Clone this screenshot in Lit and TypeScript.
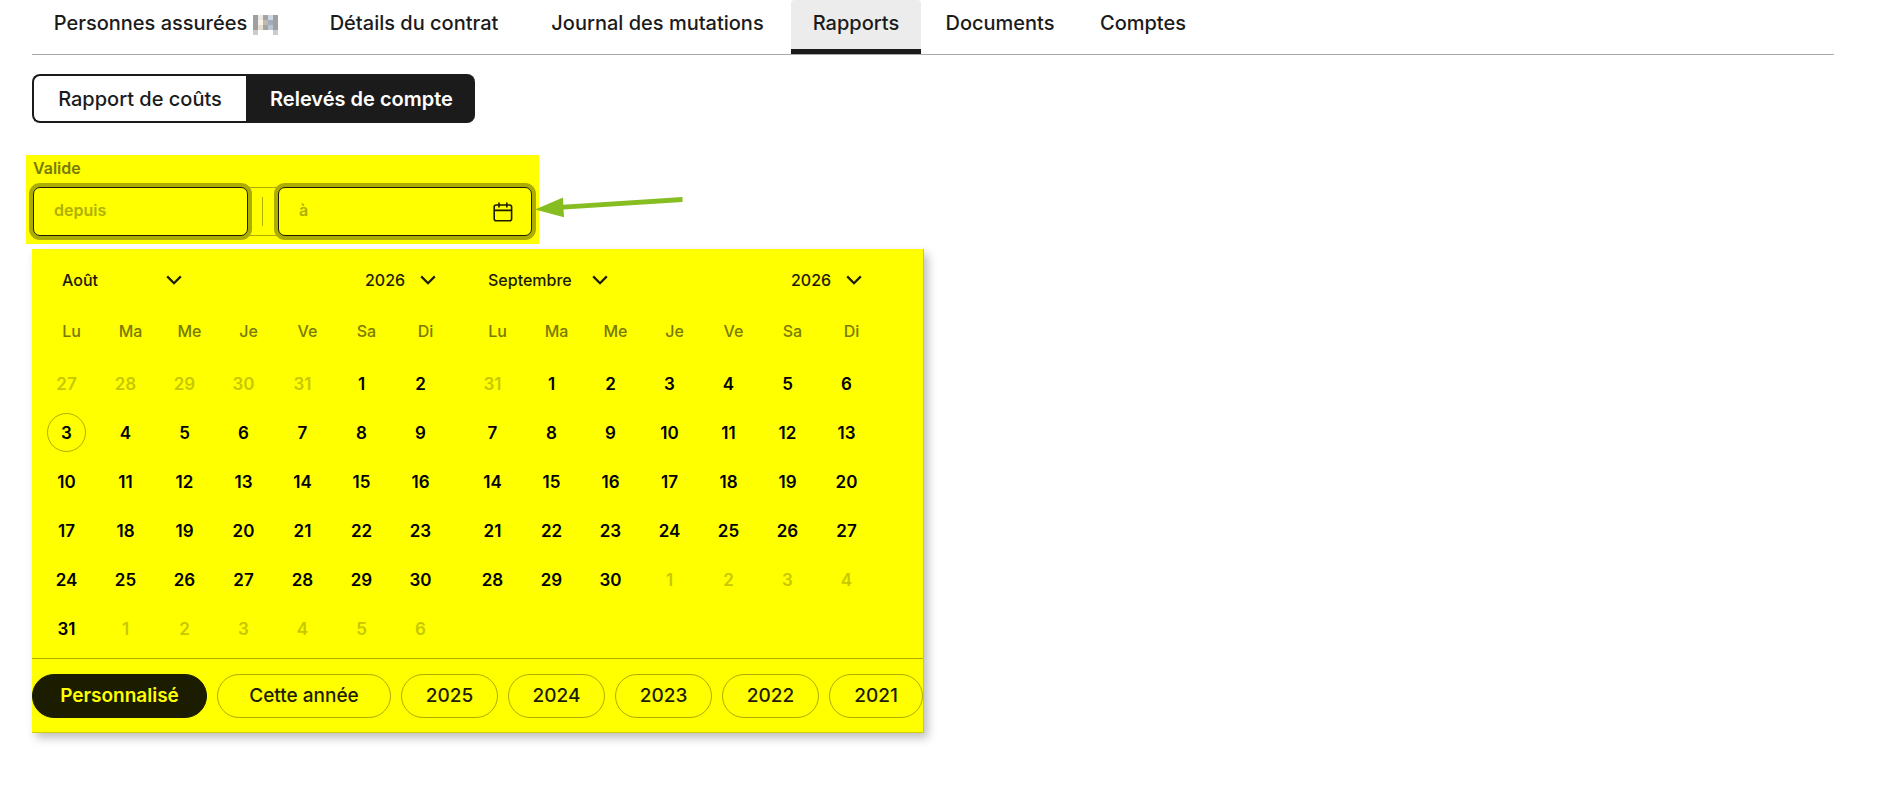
import { LitElement, html, svg, css } from "lit";
import { customElement, property } from "lit/decorators.js";
import { classMap } from "lit/directives/class-map.js";

const WEEKDAYS = ["Lu", "Ma", "Me", "Je", "Ve", "Sa", "Di"];

const chevron = html`<svg class="chevron" viewBox="0 0 16 10" width="16" height="10" aria-hidden="true">
  <path d="M1.200 1.400 8 8.200l6.800-6.800" fill="none" stroke="currentColor" stroke-width="2.200" />
</svg>`;

interface Day {
  n: number;
  outside: boolean;
}

@customElement("month-view")
export class MonthView extends LitElement {
  @property() name = "";
  @property() year = "";
  @property({ type: Number }) before = 0;
  @property({ type: Number }) previousLength = 31;
  @property({ type: Number }) length = 31;
  @property({ type: Number }) today = 0;

  static styles = css`
    :host {
      display: block;
    }
    .head {
      display: flex;
      justify-content: space-between;
      align-items: center;
      height: 46px;
      padding: 0 14px 0 25px;
    }
    .picker {
      display: grid;
      align-items: center;
      color: #1c1c00;
    }
    .picker > * {
      grid-area: 1 / 1;
    }
    .chevron {
      justify-self: end;
      pointer-events: none;
    }
    select {
      appearance: none;
      border: 0;
      margin: 0;
      padding: 0;
      background: none;
      color: inherit;
      font: 500 16px/24px Inter, sans-serif;
    }
    .month {
      width: 120px;
    }
    .year {
      width: 71px;
    }
    table {
      border-collapse: collapse;
      table-layout: fixed;
      width: 413px;
    }
    th {
      height: 56px;
      padding: 0 0 0 10px;
      color: #7a7a00;
      font: 500 16px/24px Inter, sans-serif;
    }
    td {
      height: 49px;
      padding: 0;
      text-align: center;
    }
    .day {
      width: 39px;
      height: 39px;
      padding: 0;
      border: 1px solid transparent;
      border-radius: 50%;
      background: none;
      color: #000;
      font: 600 17px/24px Inter, sans-serif;
      vertical-align: middle;
    }
    .outside {
      color: #c8c800;
    }
    .today {
      border-color: #adad00;
    }
  `;

  private weeks(): Day[][] {
    const days: Day[] = [];
    for (let i = this.before; i > 0; i--) days.push({ n: this.previousLength - i + 1, outside: true });
    for (let n = 1; n <= this.length; n++) days.push({ n, outside: false });
    for (let n = 1; days.length % 7; n++) days.push({ n, outside: true });
    const rows: Day[][] = [];
    for (let i = 0; i < days.length; i += 7) rows.push(days.slice(i, i + 7));
    return rows;
  }

  render() {
    return html`
      <div class="head">
        <div class="picker">
          <select class="month" aria-label="Mois"><option>${this.name}</option></select>
          ${chevron}
        </div>
        <div class="picker">
          <select class="year" aria-label="Année"><option>${this.year}</option></select>
          ${chevron}
        </div>
      </div>
      <table>
        <thead>
          <tr>${WEEKDAYS.map((d) => html`<th scope="col">${d}</th>`)}</tr>
        </thead>
        <tbody>
          ${this.weeks().map(
            (week) => html`<tr>
              ${week.map(
                (d) => html`<td>
                  <button
                    type="button"
                    class=${classMap({ day: true, outside: d.outside, today: !d.outside && d.n === this.today })}
                  >${d.n}</button>
                </td>`
              )}
            </tr>`
          )}
        </tbody>
      </table>
    `;
  }
}

const MOSAIC = [
  ["#a09fa0", "#ece9e3", "#a3a3a3", "#ccd8e4", "#a0a0a0"],
  ["#a09fa0", "#f5f2ee", "#c0b9a8", "#a2acbd", "#a0a0a0"],
  ["#a09fa0", "#e7ddd3", "#a3a3a3", "#b9c4d1", "#a0a0a0"],
  ["#cdcbcd", "none", "none", "none", "#cdcbcd"],
];

const TABS = ["Personnes assurées", "Détails du contrat", "Journal des mutations", "Rapports", "Documents", "Comptes"];
const PERIODS = ["Personnalisé", "Cette année", "2025", "2024", "2023", "2022", "2021"];

@customElement("app-root")
export class AppRoot extends LitElement {
  static styles = css`
    :host {
      display: block;
      padding: 0 44px 48px 32px;
      color: #1b1b1b;
      font: 500 20px/24px Inter, sans-serif;
      background: #fff;
    }
    .tabs {
      display: grid;
      grid-template-columns: 268px 220px 259px 130px 150px 128px;
      gap: 4px;
      border-bottom: 1px solid #a9a9a9;
    }
    .tab {
      display: flex;
      justify-content: center;
      align-items: center;
      gap: 6px;
      padding: 11px 0 14px;
      border-bottom: 5px solid transparent;
      color: inherit;
      text-decoration: none;
      white-space: nowrap;
    }
    .tab.active {
      border-bottom-color: #1b1b1b;
      border-radius: 4px 4px 0 0;
      background: #ececec;
    }
    .mosaic {
      align-self: end;
    }
    .segment {
      display: inline-grid;
      grid-template-columns: 214px 229px;
      margin: 19px 0 32px;
      vertical-align: top;
    }
    .choice {
      height: 49px;
      padding: 0;
      border: 2px solid #1b1b1b;
      border-right: 0;
      border-radius: 8px 0 0 8px;
      background: #fff;
      color: inherit;
      font: 500 20px/24px Inter, sans-serif;
    }
    .choice.chosen {
      border-radius: 0 8px 8px 0;
      background: #1b1b1b;
      color: #fff;
      font-weight: 600;
    }
    .range {
      position: relative;
      width: 499px;
      margin: 0 0 5px -6px;
      padding: 1px 7px 8px;
      background: #ff0;
    }
    .caption {
      display: block;
      margin-bottom: 7px;
      color: #7a7a00;
      font-size: 16px;
      font-weight: 600;
    }
    .fields {
      display: flex;
      align-items: center;
      box-shadow: inset 0 1px #adad00, inset 0 -1px #adad00;
    }
    .field {
      display: flex;
      align-items: center;
      box-sizing: border-box;
      width: 215px;
      height: 49px;
      padding: 0 18px 0 20px;
      border: 1px solid #1c1c00;
      border-radius: 7px;
      background: #ff0;
      box-shadow: 0 0 0 4px #adad00;
    }
    .field.last {
      flex: 1;
    }
    .field input {
      flex: 1;
      min-width: 0;
      padding: 0 0 3px;
      border: 0;
      outline: 0;
      background: none;
      color: #1c1c00;
      font: 600 16px/24px Inter, sans-serif;
    }
    .field input::placeholder {
      color: #b0b000;
      opacity: 1;
    }
    .opener {
      display: flex;
      padding: 0;
      border: 0;
      background: none;
      color: #1c1c00;
    }
    .separator {
      width: 1px;
      height: 29px;
      margin: 0 15px 0 14px;
      background: #adad00;
    }
    .arrow {
      position: absolute;
      left: 508px;
      top: 40px;
    }
    .panel {
      width: 892px;
      box-sizing: border-box;
      border: solid #d0d000;
      border-width: 0 1px 1px 0;
      background: #ff0;
      box-shadow: 4px 5px 9px rgba(0, 0, 0, 0.25);
    }
    .months {
      display: flex;
      gap: 13px;
      padding: 8px 5px 5px;
    }
    .periods {
      display: grid;
      grid-template-columns: 175px 174px repeat(4, 97px) 1fr;
      gap: 10px;
      padding: 15px 0 14px;
      border-top: 1px solid #adad00;
    }
    .pill {
      height: 44px;
      padding: 0;
      border: 1px solid #adad00;
      border-radius: 22px;
      background: none;
      color: #1c1c00;
      font: 500 19px/24px Inter, sans-serif;
      white-space: nowrap;
    }
    .pill.on {
      border-color: #1c1c00;
      background: #1c1c00;
      color: #ff0;
      font-weight: 600;
    }
  `;

  render() {
    return html`
      <nav class="tabs">
        ${TABS.map(
          (t, i) => html`<a href="#" class=${classMap({ tab: true, active: t === "Rapports" })}
            >${t}${i === 0
              ? html`<svg class="mosaic" width="25" height="20" viewBox="0 0 5 4" shape-rendering="crispEdges" aria-hidden="true">
                  ${MOSAIC.map((row, y) =>
                    row.map((fill, x) => svg`<rect x=${x} y=${y} width="1" height="1" fill=${fill} />`)
                  )}
                </svg>`
              : ""}</a
          >`
        )}
      </nav>

      <div class="segment">
        <button type="button" class="choice">Rapport de coûts</button>
        <button type="button" class="choice chosen">Relevés de compte</button>
      </div>

      <div class="range">
        <label class="caption" for="from">Valide</label>
        <div class="fields">
          <div class="field"><input id="from" placeholder="depuis" /></div>
          <span class="separator"></span>
          <div class="field last">
            <input placeholder="à" aria-label="Valide à" />
            <button type="button" class="opener" aria-label="Ouvrir le calendrier">
              <svg width="20" height="20" viewBox="0 0 20 20" fill="none" stroke="currentColor" stroke-width="1.6">
                <rect x="1.2" y="3" width="17.4" height="15.8" rx="2" />
                <path d="M1.2 8.400h17.400M6 .4v5M13.800 .4v5" />
              </svg>
            </button>
          </div>
        </div>
        <svg class="arrow" width="150" height="26" viewBox="0 0 150 26" aria-hidden="true">
          <path d="M1 14.500 29 2.500 29.300 9.800 148.500 2V7L29.500 14.600 30 22.200z" fill="#86bd21" />
        </svg>
      </div>

      <div class="panel">
        <div class="months">
          <month-view name="Août" year="2026" .before=${5} .previousLength=${31} .length=${31} .today=${3}></month-view>
          <month-view name="Septembre" year="2026" .before=${1} .previousLength=${31} .length=${30}></month-view>
        </div>
        <div class="periods">
          ${PERIODS.map((p, i) => html`<button type="button" class=${classMap({ pill: true, on: i === 0 })}>${p}</button>`)}
        </div>
      </div>
    `;
  }
}
